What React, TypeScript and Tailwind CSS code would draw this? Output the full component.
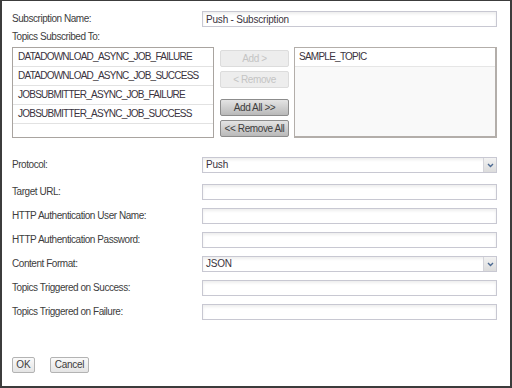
import type { FC } from "react";

const leftTopics = [
  "DATADOWNLOAD_ASYNC_JOB_FAILURE",
  "DATADOWNLOAD_ASYNC_JOB_SUCCESS",
  "JOBSUBMITTER_ASYNC_JOB_FAILURE",
  "JOBSUBMITTER_ASYNC_JOB_SUCCESS",
];

const labelCls =
  "w-[190px] shrink-0 text-[10px] tracking-[-0.45px] text-[#3d3d3d] leading-[16px]";

const inputCls =
  "w-[295px] h-[16px] border border-[#c8c8d2] bg-white shadow-[inset_0_2px_3px_rgba(0,0,0,0.07)] px-[3px] text-[10px] tracking-[-0.2px] text-[#3a3340] leading-[14px] outline-none";

const TextRow: FC<{ label: string; value?: string; className?: string }> = ({
  label,
  value = "",
  className = "",
}) => (
  <div className={"flex h-[16px] items-center " + className}>
    <span className={labelCls}>{label}</span>
    <input className={inputCls} defaultValue={value} />
  </div>
);

const SelectRow: FC<{ label: string; value: string; className?: string }> = ({
  label,
  value,
  className = "",
}) => (
  <div className={"flex h-[16px] items-center " + className}>
    <span className={labelCls}>{label}</span>
    <div className="flex w-[295px] h-[16px] border border-[#c8c8d2] bg-white shadow-[inset_0_2px_3px_rgba(0,0,0,0.07)]">
      <span className="flex-1 px-[3px] text-[10px] tracking-[-0.2px] text-[#3a3340] leading-[14px]">
        {value}
      </span>
      <span className="flex w-[13px] items-center justify-center border-l border-[#d4d4da] bg-gradient-to-b from-[#f2f2f2] to-[#dcdcdc]">
        <svg width="7" height="5" viewBox="0 0 7 5">
          <path d="M1 1 L3.5 3.5 L6 1" fill="none" stroke="#4c6a92" strokeWidth="1.4" />
        </svg>
      </span>
    </div>
  </div>
);

const MoveButton: FC<{ label: string; disabled?: boolean; className?: string }> = ({
  label,
  disabled,
  className = "",
}) => (
  <button
    className={
      (disabled
        ? "border-[#dcdcdc] bg-[#ededed] text-[#c4c4c4] "
        : "border-[#8c8c8c] bg-gradient-to-b from-[#e4e4e4] to-[#b9b9b9] text-[#3d3d3d] ") +
      "h-[17px] w-[69px] rounded-[2px] border text-[10px] tracking-[-0.4px] leading-[15px] " +
      className
    }
  >
    {label}
  </button>
);

const App: FC = () => {
  return (
    <div
      className="w-[512px] h-[388px] border-t border-l-2 border-r-2 border-b-2 border-[#3c3c3c] bg-white pl-[10px] pt-[10px]"
      style={{ fontFamily: '"Liberation Sans", Arial, sans-serif' }}
    >
      <TextRow label="Subscription Name:" value="Push - Subscription" />

      <div className="mt-[4px] h-[12px] text-[10px] tracking-[-0.45px] text-[#3d3d3d] leading-[12px]">
        Topics Subscribed To:
      </div>

      <div className="mt-[4px] flex h-[91px]">
        <div className="w-[202px] h-full border border-[#a9a4a0] bg-white overflow-hidden">
          {leftTopics.map((t) => (
            <div
              key={t}
              className="h-[19px] border-b border-[#e2e2e2] pl-[5px] text-[10px] tracking-[-0.75px] text-[#3a3340] leading-[18px]"
            >
              {t}
            </div>
          ))}
        </div>

        <div className="ml-[6px] flex w-[69px] flex-col pt-[3px]">
          <MoveButton label="Add >" disabled />
          <MoveButton label="< Remove" disabled className="mt-[4px]" />
          <MoveButton label="Add All >>" className="mt-[11px]" />
          <MoveButton label="<< Remove All" className="mt-[4px]" />
        </div>

        <div className="ml-[5px] flex w-[203px] h-full flex-col border border-r-2 border-b-2 border-[#b3aeaa] bg-[#f9f9f9]">
          <div className="h-[19px] border-b border-[#e6e6e6] bg-white pl-[4px] text-[10px] tracking-[-0.75px] text-[#3a3340] leading-[18px]">
            SAMPLE_TOPIC
          </div>
        </div>
      </div>

      <SelectRow label="Protocol:" value="Push" className="mt-[19px]" />
      <TextRow label="Target URL:" className="mt-[11px]" />
      <TextRow label="HTTP Authentication User Name:" className="mt-[8px]" />
      <TextRow label="HTTP Authentication Password:" className="mt-[8px]" />
      <SelectRow label="Content Format:" value="JSON" className="mt-[8px]" />
      <TextRow label="Topics Triggered on Success:" className="mt-[8px]" />
      <TextRow label="Topics Triggered on Failure:" className="mt-[8px]" />

      <div className="mt-[37px] flex">
        <button className="h-[16px] w-[23px] rounded-[2px] border border-[#b3b3b3] bg-gradient-to-b from-[#fafafa] to-[#e4e4e4] text-[10px] text-[#3d3d3d] leading-[14px]">
          OK
        </button>
        <button className="ml-[15px] h-[16px] w-[39px] rounded-[2px] border border-[#b3b3b3] bg-gradient-to-b from-[#fafafa] to-[#e4e4e4] text-[10px] tracking-[-0.3px] text-[#3d3d3d] leading-[14px]">
          Cancel
        </button>
      </div>
    </div>
  );
};

export default App;
